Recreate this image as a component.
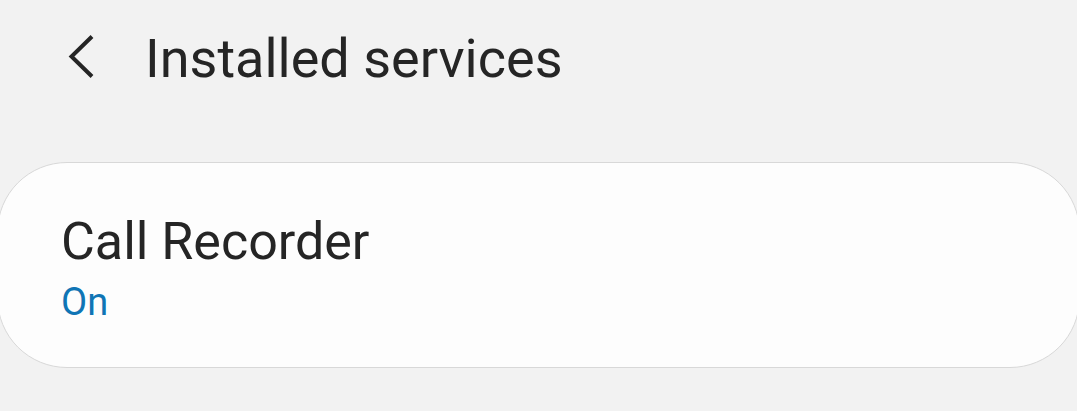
<main>
  <header>
    <button class="back" type="button" aria-label="Back">
      <svg width="28" height="44" viewBox="0 0 28 44" aria-hidden="true">
        <path d="M25 2.5 L4.5 22.5 L25 42.5" fill="none" stroke="currentColor" stroke-width="4" />
      </svg>
    </button>
    <h1>Installed services</h1>
  </header>

  <button class="card" type="button">
    <span class="name">Call Recorder</span>
    <span class="status">On</span>
  </button>
</main>

<style>
  :global(body) {
    margin: 0;
    background: #f2f2f2;
  }

  main {
    display: flex;
    flex-direction: column;
    padding: 24px 0 43px;
    overflow: hidden;
    font-family: Roboto, sans-serif;
    color: #252525;
  }

  header {
    display: flex;
    align-items: flex-start;
    gap: 50px;
    padding: 0 67px;
    margin-bottom: 68px;
  }

  button {
    font: inherit;
    color: inherit;
    cursor: pointer;
  }

  .back {
    display: flex;
    padding: 10px 0;
    border: 0;
    background: none;
  }

  h1 {
    margin: 0;
    font-size: 54px;
    font-weight: 400;
    line-height: 70px;
  }

  .card {
    display: flex;
    flex-direction: column;
    align-items: flex-start;
    margin: 0 -3px;
    padding: 44px 63px 40px;
    border: 1px solid #d8d8d8;
    border-radius: 70px;
    background: #fdfdfd;
    text-align: left;
  }

  .name {
    font-size: 52px;
    line-height: 70px;
  }

  .status {
    font-size: 38px;
    line-height: 50px;
    color: #0f75b5;
  }
</style>
